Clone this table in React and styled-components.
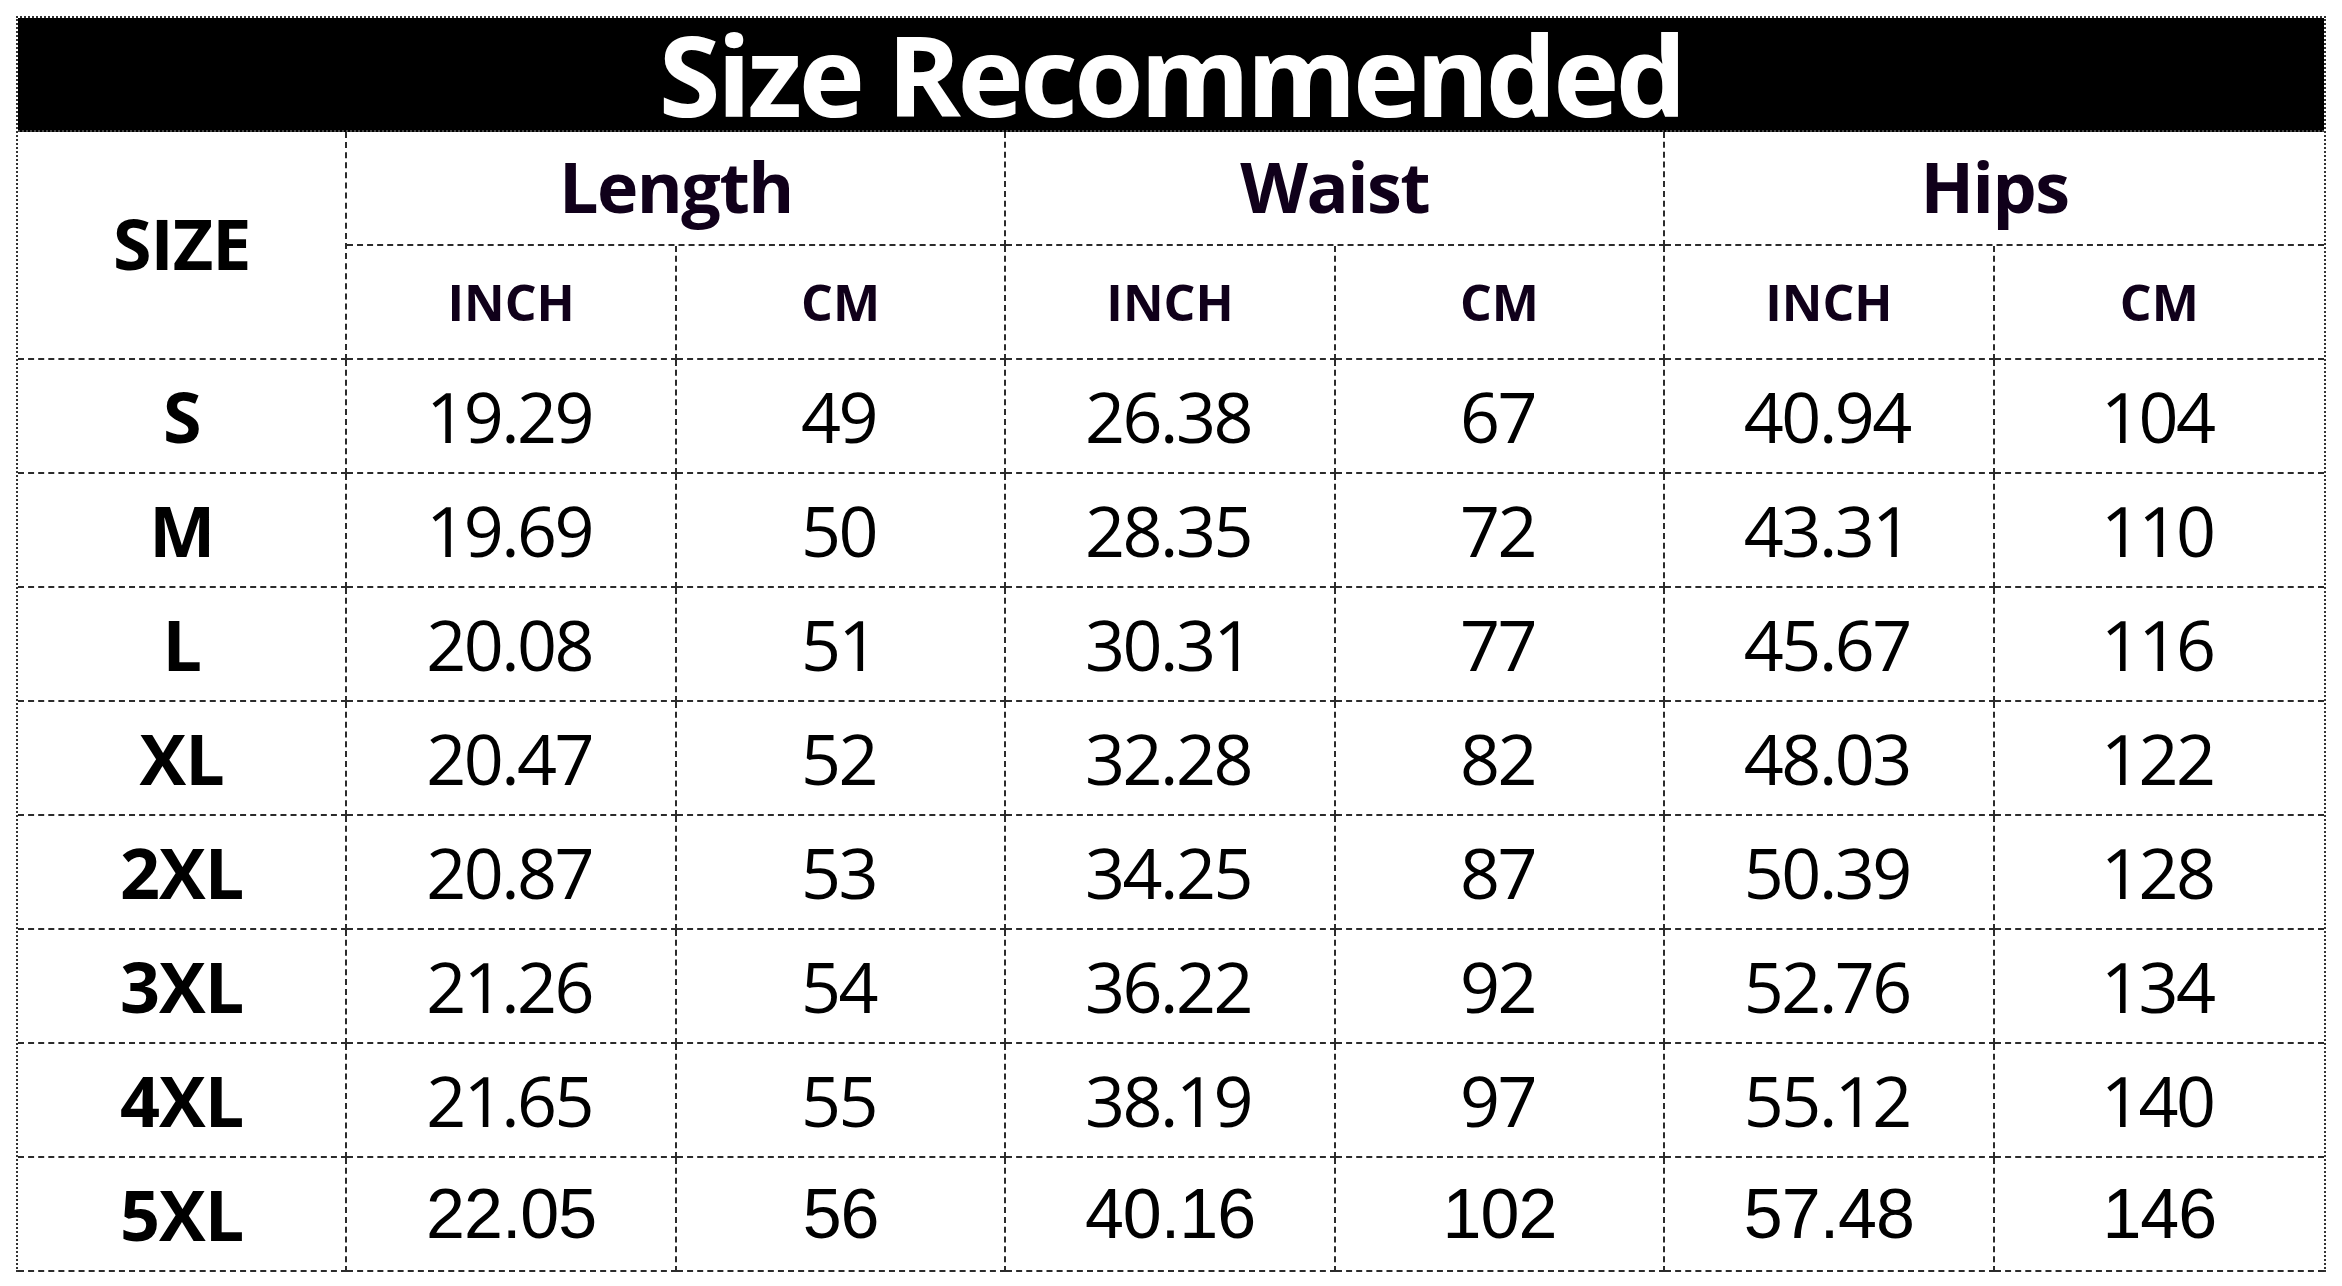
import React from 'react';
import styled, { createGlobalStyle } from 'styled-components';

const rows = [
  ['S', '19.29', '49', '26.38', '67', '40.94', '104'],
  ['M', '19.69', '50', '28.35', '72', '43.31', '110'],
  ['L', '20.08', '51', '30.31', '77', '45.67', '116'],
  ['XL', '20.47', '52', '32.28', '82', '48.03', '122'],
  ['2XL', '20.87', '53', '34.25', '87', '50.39', '128'],
  ['3XL', '21.26', '54', '36.22', '92', '52.76', '134'],
  ['4XL', '21.65', '55', '38.19', '97', '55.12', '140'],
  ['5XL', '22.05', '56', '40.16', '102', '57.48', '146'],
];

const groups = ['Length', 'Waist', 'Hips'];

const GlobalStyle = createGlobalStyle`
  html, body {
    margin: 0;
    padding: 0;
    background: #ffffff;
  }
  body {
    font-family: 'Open Sans', 'Noto Sans', sans-serif;
  }
`;

const Page = styled.div`
  padding: 16px;
  width: 2342px;
  box-sizing: border-box;
`;

const Sheet = styled.div`
  display: grid;
  grid-template-columns: repeat(7, 1fr);
  grid-auto-rows: 114px;
  border-left: 2px dotted #333;
  border-right: 2px dotted #333;
  border-top: 2px dotted #333;
  box-sizing: border-box;
`;

const TitleBar = styled.div`
  grid-column: 1 / -1;
  display: flex;
  align-items: center;
  justify-content: center;
  background: #000;
  border-bottom: 2px dotted #444;
  color: #fff;
  font-family: 'Open Sans', sans-serif;
  font-weight: 700;
  font-size: 112px;
  letter-spacing: -3.5px;
  line-height: 1;
  box-sizing: border-box;
`;

const Cell = styled.div`
  display: flex;
  align-items: center;
  justify-content: center;
  box-sizing: border-box;
  border-bottom: 2px dashed #2b2b2b;
  border-right: ${(p) => (p.$last ? 'none' : '2px dashed #2b2b2b')};
  grid-column: ${(p) => (p.$span ? `span ${p.$span}` : 'auto')};
  grid-row: ${(p) => (p.$rows ? `span ${p.$rows}` : 'auto')};
  line-height: 1;
  color: #000;
`;

const HeadText = styled.span`
  font-family: 'Open Sans', sans-serif;
  font-weight: 700;
  font-size: ${(p) => (p.$small ? '50px' : '70px')};
  letter-spacing: ${(p) => (p.$small ? '0' : '-1.5px')};
  color: #10001a;
  margin-top: ${(p) => (p.$small ? '0' : '-4px')};
`;

const SizeText = styled.span`
  font-family: 'Open Sans', sans-serif;
  font-weight: 700;
  font-size: 70px;
  letter-spacing: -1px;
  color: #000;
`;

const Num = styled.span`
  font-family: ${(p) =>
    p.$arial ? "'Liberation Sans', Arial, sans-serif" : "'Open Sans', sans-serif"};
  font-weight: 400;
  font-size: 70px;
  letter-spacing: ${(p) => (p.$arial ? '-1px' : '-2.5px')};
  margin-right: ${(p) => (p.$arial ? '0' : '4px')};
  color: #000;
`;

export default function App() {
  return (
    <>
      <GlobalStyle />
      <Page>
        <Sheet>
          <TitleBar>Size Recommended</TitleBar>

          <Cell $rows={2}>
            <SizeText as={HeadText}>SIZE</SizeText>
          </Cell>
          {groups.map((g, i) => (
            <Cell key={g} $span={2} $last={i === groups.length - 1}>
              <HeadText>{g}</HeadText>
            </Cell>
          ))}
          {groups.map((g, i) => (
            <React.Fragment key={g + '-units'}>
              <Cell>
                <HeadText $small>INCH</HeadText>
              </Cell>
              <Cell $last={i === groups.length - 1}>
                <HeadText $small>CM</HeadText>
              </Cell>
            </React.Fragment>
          ))}

          {rows.map((r, ri) => (
            <React.Fragment key={r[0]}>
              <Cell>
                <SizeText>{r[0]}</SizeText>
              </Cell>
              {r.slice(1).map((v, ci) => (
                <Cell key={ci} $last={ci === 5}>
                  <Num $arial={ri === rows.length - 1}>{v}</Num>
                </Cell>
              ))}
            </React.Fragment>
          ))}
        </Sheet>
      </Page>
    </>
  );
}
